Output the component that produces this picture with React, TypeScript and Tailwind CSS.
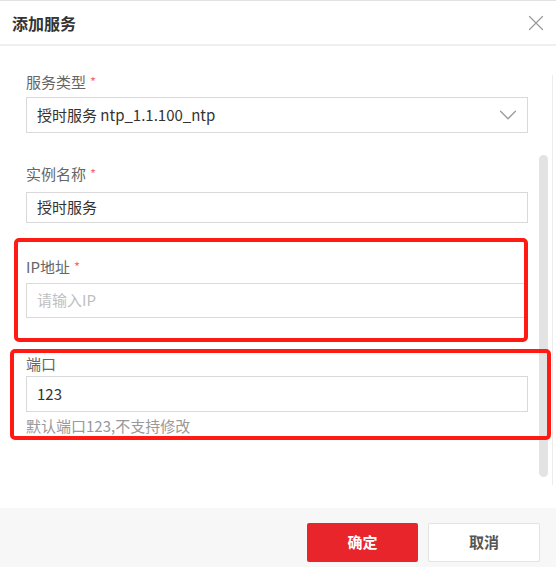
import { X, ChevronDown } from "lucide-react"

const font = { fontFamily: '"Noto Sans CJK SC", "Noto Sans", sans-serif' }

function Label({ text, required }: { text: string; required?: boolean }) {
  return (
    <div className="h-[20px] flex items-center text-[15px] leading-[20px] text-[#666]">
      {text}
      {required && <span className="ml-[4px] text-[#f56c6c] text-[13px]">*</span>}
    </div>
  )
}

export default function App() {
  return (
    <div
      className="relative w-[556px] h-[567px] bg-white flex flex-col overflow-hidden"
      style={font}
    >
      {/* header */}
      <div className="h-[46px] shrink-0 border-t border-[#e2e2e2] border-b-2 border-b-[#efefef] flex items-center justify-between pl-[12px] pr-[7px]">
        <span className="text-[16px] font-bold text-[#333]">添加服务</span>
        <X size={26} strokeWidth={1.1} className="text-[#999]" />
      </div>

      {/* body */}
      <div className="flex-1 pl-[26px] pr-[28px] pt-[26px]">
        <Label text="服务类型" required />
        <div className="mt-[5px] h-[36px] border border-[#d9d9d9] flex items-center justify-between pl-[10px] pr-[4px] text-[15px] text-[#333]">
          <span>授时服务 ntp_1.1.100_ntp</span>
          <ChevronDown size={30} strokeWidth={1} className="text-[#999]" />
        </div>

        <div className="mt-[31px]">
          <Label text="实例名称" required />
        </div>
        <div className="mt-[8px] h-[31px] border border-[#d9d9d9] flex items-center pl-[10px] text-[15px] text-[#333]">
          授时服务
        </div>

        <div className="mt-[34px]">
          <Label text="IP地址" required />
        </div>
        <div className="mt-[6px] h-[35px] border border-[#d9d9d9] flex items-center pl-[10px] text-[15px] text-[#c0c0c0]">
          请输入IP
        </div>

        <div className="mt-[36px]">
          <Label text="端口" />
        </div>
        <div className="mt-[2px] h-[36px] border border-[#d9d9d9] flex items-center pl-[10px] text-[15px] text-[#333]">
          123
        </div>
        <div className="mt-[4px] text-[15px] leading-[20px] text-[#999]">默认端口123,不支持修改</div>
      </div>

      {/* footer */}
      <div className="h-[59px] shrink-0 bg-[#f7f7f7] flex justify-end items-start pt-[15px] pr-[16px] gap-[10px]">
        <button className="w-[111px] h-[39px] bg-[#e8252b] text-white text-[15px] font-bold rounded-[2px]">
          确定
        </button>
        <button className="w-[112px] h-[39px] bg-white border border-[#e3e3e3] text-[#555] text-[15px] font-bold rounded-[2px]">
          取消
        </button>
      </div>

      {/* scrollbar */}
      <div className="absolute left-[552px] top-[75px] w-px h-[410px] bg-[#ececec]" />
      <div className="absolute left-[539px] top-[155px] w-[9px] h-[322px] rounded-full bg-[#e3e3e3]" />

      {/* annotation boxes */}
      <div className="absolute left-[14px] top-[238px] w-[514px] h-[104px] border-[4px] border-[#ff1a14] rounded-[5px]" />
      <div className="absolute left-[10px] top-[349px] w-[541px] h-[91px] border-[4px] border-[#ff1a14] rounded-[5px]" />
    </div>
  )
}
